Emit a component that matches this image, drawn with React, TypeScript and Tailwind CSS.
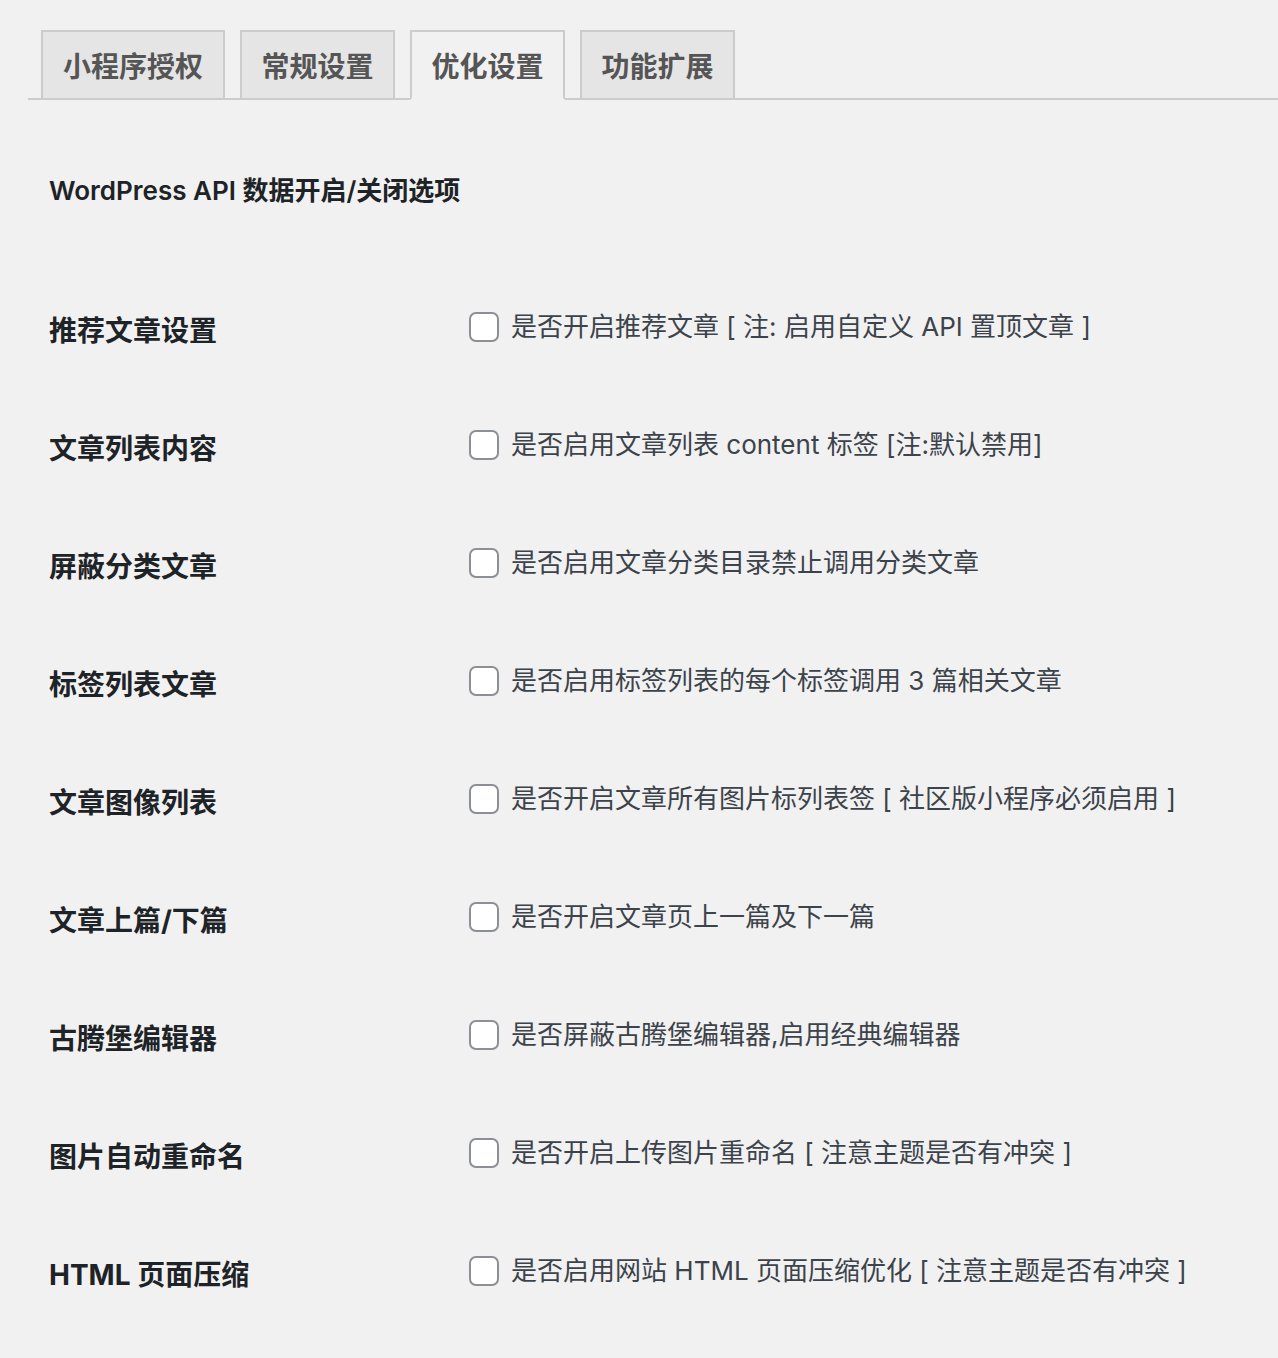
import React, { useState } from 'react';

const tabs = ['小程序授权', '常规设置', '优化设置', '功能扩展'];

const options = [
  { label: '推荐文章设置', text: '是否开启推荐文章 [ 注: 启用自定义 API 置顶文章 ]' },
  { label: '文章列表内容', text: '是否启用文章列表 content 标签 [注:默认禁用]' },
  { label: '屏蔽分类文章', text: '是否启用文章分类目录禁止调用分类文章' },
  { label: '标签列表文章', text: '是否启用标签列表的每个标签调用 3 篇相关文章' },
  { label: '文章图像列表', text: '是否开启文章所有图片标列表签 [ 社区版小程序必须启用 ]' },
  { label: '文章上篇/下篇', text: '是否开启文章页上一篇及下一篇' },
  { label: '古腾堡编辑器', text: '是否屏蔽古腾堡编辑器,启用经典编辑器' },
  { label: '图片自动重命名', text: '是否开启上传图片重命名 [ 注意主题是否有冲突 ]' },
  { label: 'HTML 页面压缩', text: '是否启用网站 HTML 页面压缩优化 [ 注意主题是否有冲突 ]' },
];

export default function App() {
  const [active, setActive] = useState(2);
  const [checked, setChecked] = useState<boolean[]>(options.map(() => false));

  return (
    <div className="min-h-[1358px] bg-[#f1f1f1] font-['Inter','Noto_Sans_CJK_SC',sans-serif] pt-[30px]">
      {/* Tabs */}
      <div className="ml-[28px] flex items-end gap-[15px] border-b-2 border-[#cccccc] pl-[13px]">
        {tabs.map((t, i) => (
          <button
            key={t}
            onClick={() => setActive(i)}
            className={
              'h-[70px] -mb-[2px] border-2 pt-[3px] text-[28px] font-bold text-[#555555] leading-none ' +
              (i === 0 ? 'px-[20px] ' : 'px-[19.5px] ') +
              (i === active
                ? 'border-[#cccccc] border-b-[#f1f1f1] bg-[#f1f1f1]'
                : 'border-[#cccccc] bg-[#e5e5e5]')
            }
          >
            {t}
          </button>
        ))}
      </div>

      <div className="pl-[49px]">
        <h2 className="mt-[74px] text-[26px] font-semibold text-[#1d2327] leading-[34px]">
          WordPress API 数据开启/关闭选项
        </h2>

        {/* Options */}
        <div className="mt-[101px]">
          {options.map((o, i) => (
            <div key={o.label} className="flex h-[118px] items-start">
              <div className="w-[420px] pt-[4px] text-[28px] font-bold leading-[36px] text-[#1d2327]">
                {o.label}
              </div>
              <label className="flex items-center gap-[12px] cursor-pointer">
                <span
                  onClick={() =>
                    setChecked(checked.map((c, j) => (j === i ? !c : c)))
                  }
                  className="flex h-[30px] w-[30px] items-center justify-center rounded-[7px] border-2 border-[#8c8f94] bg-white"
                >
                  {checked[i] && (
                    <svg viewBox="0 0 20 20" className="h-[22px] w-[22px] text-[#2271b1]">
                      <path d="M4 10l4 4 8-8" fill="none" stroke="currentColor" strokeWidth="2.5" />
                    </svg>
                  )}
                </span>
                <span className="text-[26px] leading-[36px] text-[#3c434a]">{o.text}</span>
              </label>
            </div>
          ))}
        </div>
      </div>
    </div>
  );
}
